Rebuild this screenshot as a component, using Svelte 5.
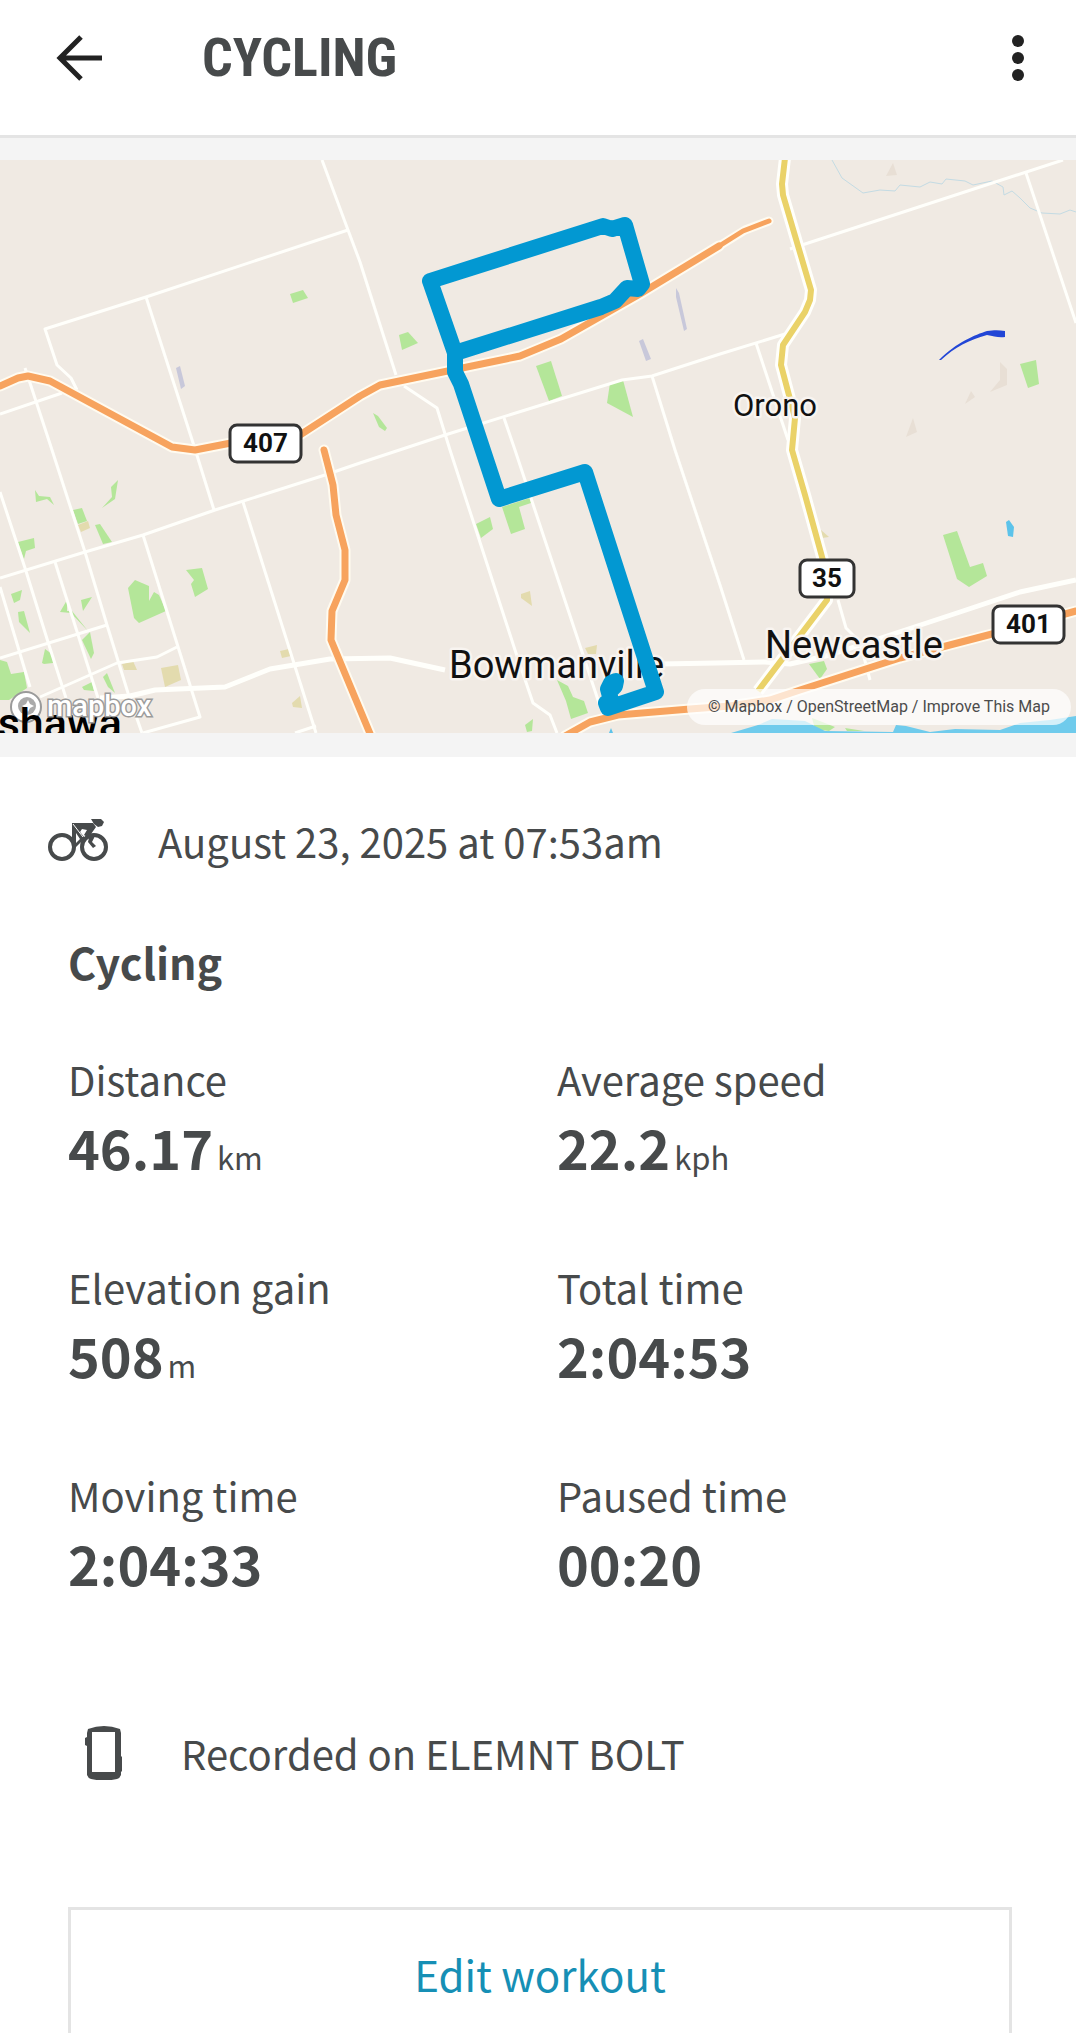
<script>
	const stats = [
		{ label: 'Distance', value: '46.17', unit: 'km' },
		{ label: 'Average speed', value: '22.2', unit: 'kph' },
		{ label: 'Elevation gain', value: '508', unit: 'm' },
		{ label: 'Total time', value: '2:04:53' },
		{ label: 'Moving time', value: '2:04:33' },
		{ label: 'Paused time', value: '00:20' }
	];

	const streets = [
		'M322 160 348 230 360 262 396 375',
		'M348 230 146 297 45 329 57 365 71 378 77 390',
		'M146 297 195 449 214 510',
		'M0 414 62 393',
		'M25 368 30 383 52 450 85 552 107 625 128 693 142 733',
		'M404 386 437 408 450 450 515 650 533 703 550 715 557 733',
		'M0 578 85 552 143 535 215 510 325 475 360 463 445 435 622 380 652 376 720 354 785 334',
		'M504 418 515 450 600 706',
		'M652 376 675 450 720 585 744 660',
		'M756 343 788 440',
		'M790 249 802 245 1063 160',
		'M1026 173 1076 323',
		'M0 492 25 568 48 642 66 698',
		'M0 587 30 687',
		'M55 562 98 698',
		'M143 535 200 717 143 733',
		'M243 502 316 733',
		'M0 658 107 625',
		'M40 697 117 663 157 657 177 647',
		'M295 733 316 726',
		'M838 600 846 628 860 642 870 680'
	];

	const mainRoads = [
		'M100 698 130 696 155 690 225 687 270 669 330 659 390 658 445 670',
		'M660 664 716 663 765 662 790 664 830 655 875 640 960 612 1020 592 1076 580'
	];

	const highways = [
		'M0 386 18 378 28 376 50 381 172 447 195 450 262 437 300 435 360 396 380 385 520 356 561 339 640 294 719 246',
		'M324 450 333 485 336 515 345 550 345 580 332 611 331 640 371 736',
		'M565 736 590 722 618 715 690 709 730 706 770 700 800 690 900 658 992 634 1076 611'
	];

	const route34 =
		'M785 158 782 184 783 195 811 290 810 300 805 312 783 345 781 365 795 418 792 450 805 495 827 575 827 600 758 691';

	const parks = [
		'290,294 303,290 308,298 293,303',
		'399,335 408,332 418,343 402,350',
		'536,366 551,361 562,396 549,401',
		'610,383 623,380 633,417 607,403',
		'373,413 378,416 387,428 385,431 379,427',
		'1020,364 1036,360 1039,384 1028,388',
		'943,535 957,531 970,567 983,563 987,576 969,587 957,579',
		'35,490 39,496 50,497 54,505 47,499 36,502',
		'118,480 115,499 102,508 112,497 111,487',
		'73,510 82,508 87,521 78,524',
		'95,525 100,524 112,542 103,544',
		'18,542 34,538 35,548 26,551 24,559',
		'11,594 22,590 20,600 14,603',
		'18,612 24,611 30,633 19,622',
		'60,612 67,600 67,611 72,611 88,631 71,613',
		'81,600 92,597 83,611',
		'128,588 135,580 149,586 149,601 154,592 159,595 166,611 139,623 134,618',
		'186,570 202,568 208,589 195,597 191,584 194,580',
		'82,640 90,632 94,653 91,659',
		'42,663 45,649 52,654 53,663 44,664',
		'0,660 7,662 11,674 24,672 27,688 9,700 0,700',
		'82,687 92,682 94,691 84,690',
		'103,677 107,673 115,693 108,687',
		'476,524 490,517 493,529 481,538',
		'502,507 530,498 531,503 519,507 525,529 511,534',
		'557,680 568,686 573,697 584,701 588,713 571,719 566,701',
		'525,725 533,719 532,731 527,732',
		'809,664 824,661 827,669 820,679',
		'812,718 835,727 829,731 815,729',
		'845,728 864,731 847,731'
	];

	const fields = [
		'78,525 88,521 90,528 81,532',
		'122,664 133,661 137,670 124,670',
		'161,668 178,665 181,680 165,687',
		'280,651 289,649 291,656 282,658',
		'300,696 302,708 293,707 292,703',
		'521,594 530,591 532,606 521,598',
		'585,648 597,645 596,654 588,654',
		'821,530 829,537 822,538'
	];

	const shields = [
		{ name: '407', x: 230, y: 425, width: 71 },
		{ name: '35', x: 800, y: 560, width: 54 },
		{ name: '401', x: 993, y: 606, width: 71 }
	];
</script>

<div class="screen">
	<header class="topbar">
		<button class="icon-button" type="button" aria-label="Back">
			<svg width="48" height="48" viewBox="0 0 48 48">
				<path d="M46 24H5M25 3 4 24l21 21" fill="none" stroke="#222" stroke-width="5" />
			</svg>
		</button>
		<h1>CYCLING</h1>
		<button class="icon-button" type="button" aria-label="More options">
			<svg width="12" height="48" viewBox="0 0 12 48" fill="#222">
				<circle cx="6" cy="7" r="6" />
				<circle cx="6" cy="24" r="6" />
				<circle cx="6" cy="41" r="6" />
			</svg>
		</button>
	</header>

	<main>
		<section class="map" aria-label="Route map">
			<svg class="tiles" viewBox="0 160 1076 573">
				<defs>
					<clipPath id="label-cut"><rect x="0" y="707" width="200" height="26" /></clipPath>
				</defs>
				<rect y="160" width="1076" height="573" fill="#f0eae3" />

				<g fill="#e8dfd5">
					<path d="m893 163 4 12-11 1zM1000 362l7 7v16l-17 7 10-12zM971 391l4 6-10 7zM913 418l4 14-11 5z" />
				</g>
				{#each fields as points}
					<polygon {points} fill="#e3dbae" />
				{/each}
				{#each parks as points}
					<polygon {points} fill="#b4e699" />
				{/each}
				<path d="m176 368 4-2 5 20-4 3zM676 288l3 5 8 36-3 2-8-34zM639 341l4-2 8 20-5 2z" fill="#c8c8da" />
				<path
					d="M731 733 758 725 772 719 805 721 825 731 893 732 896 725 906 726 930 732 955 729 1000 730 1020 723 1050 720 1076 716V733z"
					fill="#6fcbec"
				/>
				<path d="m1006 522 3-2 5 7-1 10-5-1z" fill="#5cc3ea" />
				<path d="m611 728 2 5h-4z" fill="#5cc3ea" />
				<path
					d="M832 160 842 178 863 193 880 190 895 191 900 185 920 187 930 182 942 184 946 179 965 181 973 185 992 181 1003 187 1004 195 1012 191 1020 198 1030 208 1042 213 1060 214 1070 210 1076 212"
					fill="none"
					stroke="#c3dbe3"
				/>

				<g fill="none" stroke-linejoin="round">
					{#each streets as d}
						<path {d} stroke="#fffffb" stroke-width="3" />
					{/each}
					{#each mainRoads as d}
						<path {d} stroke="#fffffb" stroke-width="5" />
					{/each}
					<path d={route34} stroke="#fffffb" stroke-width="12" />
					<path d={route34} stroke="#ead268" stroke-width="6" />
					{#each highways as d}
						<path {d} stroke="#fffbf0" stroke-width="11" stroke-linecap="round" />
					{/each}
					<path d="M716 248 745 230 769 221" stroke="#fffbf0" stroke-width="9" stroke-linecap="round" />
					{#each highways as d}
						<path {d} stroke="#f7a35e" stroke-width="7" stroke-linecap="round" />
					{/each}
					<path d="M716 248 743 231 769 221" stroke="#f7a35e" stroke-width="5" stroke-linecap="round" />
				</g>

				<g class="places">
					<text x="733" y="416" font-size="31">Orono</text>
					<text x="449" y="678" font-size="38">Bowmanville</text>
					<text x="765" y="658" font-size="38">Newcastle</text>
				</g>

				{#each shields as shield}
					<rect
						x={shield.x}
						y={shield.y}
						width={shield.width}
						height="37"
						rx="7"
						fill="#fff"
						stroke="#333"
						stroke-width="3"
					/>
					<text class="shield" x={shield.x + shield.width / 2} y={shield.y + 27}>{shield.name}</text>
				{/each}

				<path
					d="M430 281 603 226 612 229 625 225 642 284 638 289 627 288 615 301 601 307 455 353M430 281 455 353 455 372 461 384 499 499 585 472 656 692 608 708 606 703 612 704 608 689 611 683 616 681 615 686 609 692"
					fill="none"
					stroke="#0298d2"
					stroke-width="16"
					stroke-linejoin="round"
					stroke-linecap="round"
				/>
				<path d="M939 360c18-18 36-25 48-29 7-1 12-1 18 0v6c-7 1-11-1-18-2-18 5-32 12-46 25z" fill="#2246d6" />

				<circle cx="26" cy="707" r="15" fill="#fff" stroke="#9a9a9a" stroke-width="2" />
				<circle cx="27" cy="706" r="9" fill="#aaa" />
				<path d="m28 700 2 4 4 2-4 2-2 4-2-4-4-2 4-2z" fill="#fff" />
				<g class="town" clip-path="url(#label-cut)">
					<text x="-32" y="738">Oshawa</text>
				</g>
				<text class="logo" x="47" y="716">mapbox</text>
			</svg>
			<p class="attribution">
				<a href="#mapbox">© Mapbox</a> / <a href="#osm">OpenStreetMap</a> / <a href="#improve">Improve This Map</a>
			</p>
		</section>

		<section class="details">
			<div class="when">
				<svg width="60" height="44" viewBox="0 0 60 44">
					<g fill="none" stroke="#474a4b" stroke-width="4">
						<circle cx="14" cy="28" r="12" />
						<circle cx="46" cy="28" r="12" />
					</g>
					<path
						d="M24 4h21l3 4-5 7 4 2-3 6 4 4-3 2-5-6 1-4-5-3 3-5-5-1-2 3 5 6-9 9-2 2-2-2z"
						fill="#474a4b"
					/>
					<path d="M28 14v10l4-4z" fill="#fff" />
					<path d="M25 5l10 13" fill="none" stroke="#fff" />
					<path d="M43 0h10l3 3-2 4-4 1-4-3z" fill="#474a4b" />
				</svg>
				<time datetime="2025-08-23T07:53">August 23, 2025 at 07:53am</time>
			</div>

			<h2>Cycling</h2>

			<dl class="stats">
				{#each stats as stat}
					<div>
						<dt>{stat.label}</dt>
						<dd>
							{stat.value}{#if stat.unit}<span class="unit">{stat.unit}</span>{/if}
						</dd>
					</div>
				{/each}
			</dl>

			<div class="device">
				<svg width="38" height="54" viewBox="0 0 38 54" fill="#474a4b">
					<path
						fill-rule="evenodd"
						d="M3 3Q19-3 35 3l1 4v23l1 1v14l-1 1v3q-1 3-4 4-13 3-26 0-3-1-4-4V20l-2-1v-7l2-1V7zM7 6v40h23V6z"
					/>
				</svg>
				<span>Recorded on ELEMNT BOLT</span>
			</div>

			<button class="edit" type="button">Edit workout</button>
		</section>
	</main>
</div>

<style>
	:global(body) {
		background: #fff;
	}

	.screen {
		display: flex;
		flex-direction: column;
		height: 100vh;
		color: #474a4b;
		font-family: 'Noto Sans CJK SC', 'Noto Sans', sans-serif;
		font-size: 40px;
		line-height: 56px;
	}

	.topbar {
		display: flex;
		align-items: center;
		flex: none;
		padding: 16px 52px 35px 56px;
		border-bottom: 3px solid #e4e4e4;
	}

	.icon-button {
		display: flex;
		align-items: center;
		height: 84px;
		padding: 0;
		border: 0;
		background: none;
	}

	h1 {
		flex: 1;
		margin: 0 0 0 98px;
		font-family: 'Liberation Sans Narrow', 'Roboto Condensed', 'Liberation Sans', sans-serif;
		font-size: 54px;
		font-weight: 700;
	}

	main {
		flex: 1;
		min-height: 0;
		overflow-y: auto;
		scrollbar-width: none;
	}

	.map {
		position: relative;
		padding: 22px 0 24px;
		background: #f4f4f4;
	}

	.tiles {
		display: block;
		width: 100%;
		font-family: Roboto, sans-serif;
	}

	.places,
	.town {
		fill: #111;
		stroke: #f8f4f0;
		stroke-width: 5px;
		stroke-linejoin: round;
		paint-order: stroke;
	}

	.town {
		font-size: 43px;
		font-weight: 500;
		fill: #000;
		stroke: none;
	}

	.shield {
		font-size: 26px;
		font-weight: 700;
		text-anchor: middle;
		fill: #111;
	}

	.logo {
		font-size: 29px;
		font-weight: 500;
		fill: #fff;
		stroke: #9a9a9a;
		stroke-width: 3px;
		paint-order: stroke;
	}

	.attribution {
		position: absolute;
		right: 5px;
		bottom: 32px;
		margin: 0;
		padding: 0 21px;
		border-radius: 18px;
		background: rgba(255, 255, 255, 0.7);
		color: #4c4c4c;
		font-family: Roboto, sans-serif;
		font-size: 16px;
		line-height: 36px;
	}

	.attribution a {
		color: inherit;
		text-decoration: none;
	}

	.details {
		padding: 56px 64px 48px 68px;
	}

	.when {
		display: flex;
		align-items: center;
		gap: 50px;
		margin-left: -20px;
	}

	h2 {
		margin: 64px 0 62px;
		font-size: 43px;
		font-weight: 700;
		line-height: 56px;
	}

	.stats {
		display: grid;
		grid-template-columns: 1fr 1fr;
		gap: 72px 34px;
		margin: 0;
	}

	dd {
		margin: 0;
		font-size: 54px;
		font-weight: 600;
		line-height: 80px;
	}

	.unit {
		margin-left: 4px;
		font-size: 31px;
		font-weight: 400;
		line-height: 40px;
	}

	.device {
		display: flex;
		align-items: center;
		gap: 58px;
		margin: 122px 0 126px 17px;
	}

	.edit {
		display: block;
		width: 100%;
		padding: 36px;
		border: 3px solid #e4e4e4;
		background: none;
		color: #168fb5;
		font: inherit;
		font-size: 42px;
	}
</style>
